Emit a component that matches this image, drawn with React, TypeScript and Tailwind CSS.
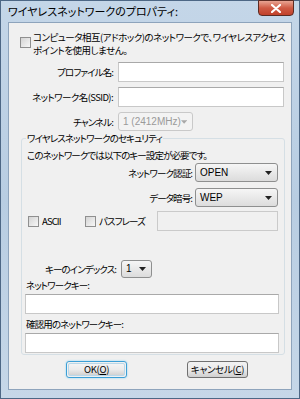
import React from "react";

const font = "font-['Noto_Sans_CJK_JP','Noto_Sans',sans-serif] [font-feature-settings:'palt']";

function Box() {
  return <span className="w-[11px] h-[11px] border border-[#8f8f8f] bg-gradient-to-br from-[#d4d4d4] to-[#f7f7f7] shrink-0" />;
}

function Check({ label }: { label: string }) {
  return (
    <label className="flex items-center gap-[3px] whitespace-nowrap">
      <Box />
      <span>{label}</span>
    </label>
  );
}

function Select({ value, disabled, className }: { value: string; disabled?: boolean; className: string }) {
  return (
    <div
      className={`shrink-0 flex items-center justify-between pl-[4px] pr-[5px] rounded-[3px] border whitespace-nowrap ${
        disabled
          ? "border-[#c9c9c9] bg-[#f3f3f3] text-[#9a9a9a]"
          : "border-[#8e8f8f] bg-gradient-to-b from-[#f6f6f6] to-[#dcdcdc] text-black"
      } ${className}`}
    >
      <span className="font-['Liberation_Sans',sans-serif] text-[10px] tracking-normal">{value}</span>
      <svg width="7" height="4" viewBox="0 0 7 4">
        <path d="M0 0h7L3.5 4z" fill={disabled ? "#a8a8a8" : "#222"} />
      </svg>
    </div>
  );
}

function TextBox({ className, disabled }: { className: string; disabled?: boolean }) {
  return (
    <div
      className={`h-[20px] shrink-0 border ${
        disabled ? "bg-[#f0f0f0] border-[#cacaca]" : "bg-white border-[#c8c8c8] border-t-[#a9a9a9]"
      } ${className}`}
    />
  );
}

export default function App() {
  return (
    <div className={`w-[300px] h-[399px] flex flex-col bg-gradient-to-b from-[#c4d6e8] via-[#b8cde2] to-[#c6d7e8] border border-[#4d6785] text-[9.5px] leading-[12px] tracking-[-0.9px] text-black ${font}`}>
      {/* title bar */}
      <div className="h-[21px] shrink-0 flex items-start justify-between pl-[7px] pr-[5px]">
        <span className="mt-[5px] text-[11px] leading-none tracking-[0px] whitespace-nowrap">ワイヤレスネットワークのプロパティ:</span>
        <div className="w-[36px] h-[16px] -mt-[1px] rounded-b-[4px] border border-[#5c2b23] bg-gradient-to-b from-[#e8a493] via-[#cf5a44] to-[#c1412b] flex items-center justify-center">
          <svg width="10" height="9" viewBox="0 0 10 9">
            <path d="M1 1l8 7M9 1l-8 7" stroke="#ffffff" strokeWidth="2.2" strokeLinecap="round" />
          </svg>
        </div>
      </div>

      {/* client area */}
      <div className="flex-1 mx-[7px] mb-[8px] bg-[#f0f0f0] border border-[#8ea4bc] flex flex-col pl-[11px] whitespace-nowrap">
        <div className="flex items-start gap-[2px] mt-[8px]">
          <span className="mt-[6px] flex">
            <Box />
          </span>
          <div className="flex flex-col tracking-[-0.5px] leading-[13px]">
            <span>コンピュータ相互(アドホック)のネットワークで、ワイヤレスアクセス</span>
            <span>ポイントを使用しません。</span>
          </div>
        </div>

        <div className="flex items-center mt-[5px]">
          <span className="w-[98px] shrink-0 text-right pr-[5px]">プロファイル名:</span>
          <TextBox className="w-[166px]" />
        </div>
        <div className="flex items-center mt-[5px]">
          <span className="w-[98px] shrink-0 text-right pr-[5px] tracking-[-0.6px]">ネットワーク名(SSID):</span>
          <TextBox className="w-[166px]" />
        </div>
        <div className="flex items-center mt-[5px]">
          <span className="w-[98px] shrink-0 text-right pr-[5px]">チャンネル:</span>
          <Select value="1 (2412MHz)" disabled className="w-[75px] h-[19px]" />
        </div>

        {/* security group */}
        <div className="relative mt-[7px] ml-[1px] w-[264px] border border-[#d5dfe5] rounded-[3px] flex flex-col pl-[3px] pr-[6px] pb-[1px]">
          <span className="absolute -top-[7px] left-[4px] bg-[#f0f0f0] px-[1px] leading-[12px]">
            ワイヤレスネットワークのセキュリティ
          </span>
          <div className="mt-[10px] ml-[2px]">このネットワークでは以下のキー設定が必要です。</div>
          <div className="flex items-center justify-end mt-[2px]">
            <span className="pr-[3px]">ネットワーク認証:</span>
            <Select value="OPEN" className="w-[83px] h-[19px]" />
          </div>
          <div className="flex items-center justify-end mt-[6px]">
            <span className="pr-[3px]">データ暗号:</span>
            <Select value="WEP" className="w-[83px] h-[19px]" />
          </div>
          <div className="flex items-center mt-[4px] pl-[3px]">
            <div className="w-[57px] shrink-0">
              <Check label="ASCII" />
            </div>
            <Check label="パスフレーズ" />
            <div className="flex-1" />
            <TextBox disabled className="w-[121px]" />
          </div>
          <div className="flex items-center mt-[29px] pl-[20px]">
            <span className="pr-[5px]">キーのインデックス:</span>
            <Select value="1" className="w-[31px] h-[18px]" />
          </div>
          <div className="mt-[1px] ml-[1px]">ネットワークキー:</div>
          <TextBox className="w-[254px] mt-[3px]" />
          <div className="mt-[4px] ml-[1px]">確認用のネットワークキー:</div>
          <TextBox className="w-[254px] mt-[3px]" />
        </div>

        <div className="flex gap-[60px] mt-[6px] pl-[46px] tracking-[-0.3px]">
          <div className="w-[61px] h-[17px] rounded-[3px] border border-[#3c9fd6] shadow-[0_0_2px_#7fd0f5] p-[1px]">
            <button className="w-full h-full rounded-[2px] bg-gradient-to-b from-[#f4f4f4] via-[#ebebeb] to-[#d2d2d2] border border-[#b8d8ea] text-[9.5px] leading-none flex items-center justify-center">
              OK(<span className="underline">O</span>)
            </button>
          </div>
          <button className="w-[61px] h-[17px] rounded-[3px] border border-[#707070] bg-gradient-to-b from-[#f2f2f2] via-[#ebebeb] to-[#cfcfcf] text-[9.5px] leading-none flex items-center justify-center">
            キャンセル(<span className="underline">C</span>)
          </button>
        </div>
      </div>
    </div>
  );
}
